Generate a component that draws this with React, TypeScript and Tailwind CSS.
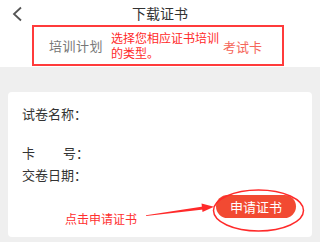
import React from "react";

export default function App() {
  const font = { fontFamily: '"Noto Sans CJK SC", "Noto Sans", sans-serif' };
  return (
    <div className="relative w-[320px] h-[242px] bg-[#efefef] overflow-hidden" style={font}>
      <div className="bg-white h-[67px]">
        <div className="grid grid-cols-[40px_1fr_40px] h-[25px] items-center">
          <div className="pl-[11px] pt-[2px] flex items-center">
            <svg width="12" height="16" viewBox="0 0 12 16">
              <path d="M10 1.5 L3 8 L10 14.5" fill="none" stroke="#555" strokeWidth="1.8" />
            </svg>
          </div>
          <div className="text-center text-[14px] leading-[18px] text-[#333]">下载证书</div>
          <div />
        </div>
        <div className="ml-[32px] w-[252px] h-[41px] border-2 border-[#ff3b3b] flex items-center">
          <div className="pl-[15px] text-[13px] leading-[16px] text-[#777] tracking-[0.5px]">培训计划</div>
          <div className="ml-[8px] w-[112px] text-[12px] leading-[15px] text-[#ff2a2a] -mt-[1px]">
            选择您相应证书培训的类型。
          </div>
          <div className="text-[13px] leading-[16px] text-[#f5665a] mt-[2px]">考试卡</div>
        </div>
      </div>
      <div className="px-[8px] pt-[25px]">
        <div className="bg-white rounded-[4px] h-[145px] pl-[14px] pr-[16px] pt-[13px]">
          <div className="text-[13px] leading-[18px] text-[#333]">试卷名称：</div>
          <div className="mt-[21px] text-[13px] leading-[18px] text-[#333] flex">
            <span className="w-[41px]">卡</span>
            <span>号：</span>
          </div>
          <div className="mt-[4px] text-[13px] leading-[18px] text-[#333]">交卷日期：</div>
          <div className="mt-[11px] flex justify-end">
            <div className="w-[80px] h-[23px] rounded-full bg-[#f24a32] text-white text-[13px] flex items-center justify-center">
              申请证书
            </div>
          </div>
        </div>
      </div>
      <div className="absolute left-[65px] top-[211px] text-[12px] leading-[16px] text-[#ff2f2f]">点击申请证书</div>
      <svg className="absolute left-0 top-0 pointer-events-none" width="320" height="242" viewBox="0 0 320 242">
        <ellipse cx="258.5" cy="210.5" rx="45" ry="20.5" fill="none" stroke="#ff2a2a" strokeWidth="1.5" />
        <polygon points="146,215.2 203,206.6 203.4,209.4 146,215.9" fill="#ff2a2a" />
        <polygon points="201.5,203.5 214,206.8 202.5,212" fill="#ff2a2a" />
      </svg>
    </div>
  );
}
